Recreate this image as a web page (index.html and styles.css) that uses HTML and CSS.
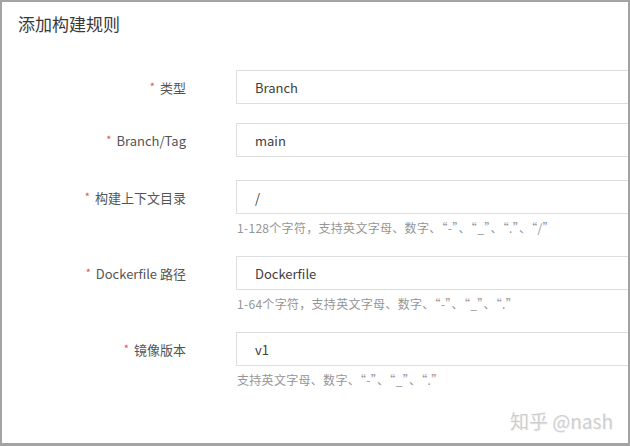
FILE: index.html
```html
<!DOCTYPE html>
<html lang="zh-CN">
<head>
<meta charset="utf-8">
<title>添加构建规则</title>
<link rel="stylesheet" href="styles.css">
</head>
<body>
<div class="frame">
  <h1 class="title">添加构建规则</h1>
  <div class="form">
    <div class="row">
      <label class="label"><span class="req">*</span>类型</label>
      <div class="field"><div class="input">Branch</div></div>
    </div>
    <div class="row">
      <label class="label"><span class="req">*</span>Branch/Tag</label>
      <div class="field"><div class="input">main</div></div>
    </div>
    <div class="row row-wide">
      <label class="label"><span class="req">*</span>构建上下文目录</label>
      <div class="field">
        <div class="input">/</div>
        <div class="hint">1-128个字符，支持英文字母、数字、“-”、“_”、“.”、“/”</div>
      </div>
    </div>
    <div class="row">
      <label class="label"><span class="req">*</span>Dockerfile 路径</label>
      <div class="field">
        <div class="input">Dockerfile</div>
        <div class="hint">1-64个字符，支持英文字母、数字、“-”、“_”、“.”</div>
      </div>
    </div>
    <div class="row">
      <label class="label"><span class="req">*</span>镜像版本</label>
      <div class="field">
        <div class="input">v1</div>
        <div class="hint">支持英文字母、数字、“-”、“_”、“.”</div>
      </div>
    </div>
  </div>
  <div class="watermark">知乎 @nash</div>
</div>
</body>
</html>
```

FILE: styles.css
```css
html, body {
  margin: 0;
  padding: 0;
  background: #ffffff;
}

body {
  width: 630px;
  height: 446px;
  overflow: hidden;
  font-family: "Noto Sans CJK SC", "Noto Sans", sans-serif;
}

.frame {
  position: relative;
  box-sizing: border-box;
  width: 630px;
  height: 446px;
  border-style: solid;
  border-color: #a3a3a3;
  border-width: 2px 2px 3px 2px;
  background: #ffffff;
  overflow: hidden;
}

.title {
  margin: 0;
  padding: 10px 0 0 16px;
  font-size: 17px;
  line-height: 24px;
  font-weight: normal;
  color: #3a3a3a;
}

.form {
  display: flex;
  flex-direction: column;
  gap: 19px;
  margin-top: 34px;
}

.row {
  display: grid;
  grid-template-columns: 184px 1fr;
  column-gap: 50px;
  align-items: start;
}

.row-wide {
  margin-top: 4px;
}

.label {
  height: 34px;
  display: flex;
  align-items: center;
  justify-content: flex-end;
  font-size: 13px;
  color: #555555;
  white-space: nowrap;
}

.req {
  color: #e5534b;
  font-size: 11px;
  margin-right: 5px;
  position: relative;
  top: -1px;
}

.field {
  display: flex;
  flex-direction: column;
}

.input {
  box-sizing: border-box;
  width: 520px;
  height: 34px;
  border: 1px solid #dedede;
  padding-left: 18px;
  display: flex;
  align-items: center;
  font-size: 13px;
  color: #404040;
}

.hint {
  margin-top: 5px;
  line-height: 18px;
  font-size: 12px;
  letter-spacing: 0.3px;
  color: #959595;
  padding-left: 1px;
  white-space: nowrap;
}

.watermark {
  position: absolute;
  right: 15px;
  bottom: 10px;
  font-size: 19px;
  line-height: 24px;
  color: #cfcfcf;
  text-shadow: 1px 1px 0 #f4f4f4;
  white-space: nowrap;
}
```
